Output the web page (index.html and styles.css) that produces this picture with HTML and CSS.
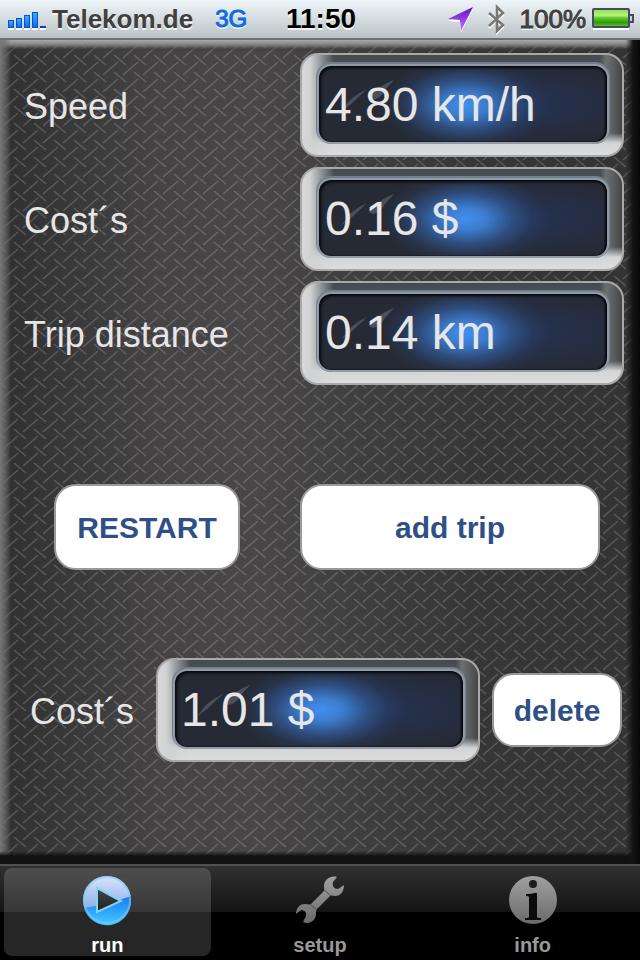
FILE: index.html
```html
<!DOCTYPE html>
<html lang="en">
<head>
    <meta charset="UTF-8">
    <meta name="viewport" content="width=device-width, initial-scale=1.0">
    <title>Trip Costs</title>
    <link rel="stylesheet" href="styles.css">
</head>
<body>

    <!-- Status bar -->
    <header class="status-bar">
        <div class="status-left">
            <svg class="signal" width="38" height="18" viewBox="0 0 38 18">
                <defs>
                    <linearGradient id="signal-fill" x1="0" y1="0" x2="0" y2="1">
                        <stop offset="0" stop-color="#35b0ff"/>
                        <stop offset="1" stop-color="#0a6cf0"/>
                    </linearGradient>
                </defs>
                <g fill="#fff">
                    <rect x="0" y="16" width="6" height="2"/>
                    <rect x="8" y="16" width="6" height="2"/>
                    <rect x="16" y="16" width="6" height="2"/>
                    <rect x="24" y="16" width="6" height="2"/>
                    <rect x="32" y="16" width="6" height="2"/>
                </g>
                <g fill="url(#signal-fill)" stroke="#0b50c8">
                    <rect x="0.5" y="8.500" width="5" height="7"/>
                    <rect x="8.500" y="6.500" width="5" height="9"/>
                    <rect x="16.500" y="3.500" width="5" height="12"/>
                    <rect x="24.500" y="0.500" width="5" height="15"/>
                </g>
                <rect x="32" y="14" width="6" height="2" fill="#0b3fc0"/>
            </svg>
            <span class="carrier">Telekom.de</span>
            <span class="network">3G</span>
        </div>
        <time class="clock">11:50</time>
        <div class="status-right">
            <svg class="location" width="26" height="26" viewBox="0 0 26 26">
                <defs>
                    <linearGradient id="arrow-fill" x1="0" y1="0" x2="0" y2="1">
                        <stop offset="0" stop-color="#5a10c8"/>
                        <stop offset="1" stop-color="#d070ff"/>
                    </linearGradient>
                </defs>
                <path d="M25 3 L0 15 L12 16 L13 27 Z" fill="#fff"/>
                <path d="M25 1 L0 13 L12 14 L13 25 Z" fill="url(#arrow-fill)"/>
            </svg>
            <svg class="bluetooth" width="18" height="32" viewBox="0 0 18 32">
                <path d="M1 10 L15 22 L9 28 V4 L15 10 L1 23" fill="none" stroke="#fff" stroke-width="2" transform="translate(0 2)"/>
                <path d="M1 10 L15 22 L9 28 V4 L15 10 L1 23" fill="none" stroke="#777" stroke-width="2.5"/>
            </svg>
            <span class="percent">100%</span>
            <svg class="battery" width="42" height="22" viewBox="0 0 42 22">
                <defs>
                    <linearGradient id="battery-fill" x1="0" y1="0" x2="0" y2="1">
                        <stop offset="0" stop-color="#8fdc55"/>
                        <stop offset="0.35" stop-color="#b4f57c"/>
                        <stop offset="0.5" stop-color="#63c52d"/>
                        <stop offset="0.75" stop-color="#2f9a08"/>
                        <stop offset="1" stop-color="#67ca2b"/>
                    </linearGradient>
                </defs>
                <path d="M1 21 H37" stroke="#fff" stroke-width="2"/>
                <rect x="1" y="1" width="36" height="18" rx="1" fill="url(#battery-fill)" stroke="#474b62" stroke-width="2"/>
                <path d="M38 7 H41 V14 H38" fill="#c8ced5" stroke="#474b62" stroke-width="2"/>
            </svg>
        </div>
    </header>

    <main class="panel">
        <div class="reading">
            <label for="speed">Speed</label>
            <div class="display">
                <output class="screen" id="speed">4.80 km/h</output>
            </div>
        </div>
        <div class="reading">
            <label for="costs">Cost´s</label>
            <div class="display">
                <output class="screen" id="costs">0.16 $</output>
            </div>
        </div>
        <div class="reading">
            <label for="distance">Trip distance</label>
            <div class="display">
                <output class="screen" id="distance">0.14 km</output>
            </div>
        </div>

        <div class="actions">
            <button class="btn btn-restart" type="button">RESTART</button>
            <button class="btn btn-add" type="button">add trip</button>
        </div>

        <div class="total">
            <label for="total">Cost´s</label>
            <div class="display">
                <output class="screen" id="total">1.01 $</output>
            </div>
            <button class="btn btn-delete" type="button">delete</button>
        </div>
    </main>

    <!-- Tab bar -->
    <nav class="tab-bar">
        <a class="tab active" href="#run">
            <svg width="48" height="48" viewBox="0 0 48 48">
                <defs>
                    <linearGradient id="run-top" x1="0" y1="0" x2="0" y2="1">
                        <stop offset="0" stop-color="#d9e5fb"/>
                        <stop offset="0.65" stop-color="#8db3ec"/>
                    </linearGradient>
                    <linearGradient id="run-bottom" x1="0" y1="0" x2="0" y2="1">
                        <stop offset="0" stop-color="#1a79f2"/>
                        <stop offset="1" stop-color="#44ccff"/>
                    </linearGradient>
                    <linearGradient id="run-arrow" x1="0" y1="0" x2="0" y2="1">
                        <stop offset="0" stop-color="#444"/>
                        <stop offset="1" stop-color="#222"/>
                    </linearGradient>
                </defs>
                <circle cx="24" cy="24" r="24" fill="url(#run-top)"/>
                <path d="M1 32 Q24 29 48 20 V24 A24 24 0 0 1 1 32 Z" fill="url(#run-bottom)"/>
                <circle cx="24" cy="24" r="23" fill="none" stroke="#7ccaf8" stroke-width="2" opacity="0.6"/>
                <path d="M14 12 L38 25 L14 36 Z" fill="url(#run-arrow)" stroke="#82d3fa" stroke-width="2"/>
            </svg>
            <span>run</span>
        </a>
        <a class="tab" href="#setup">
            <svg width="48" height="48" viewBox="0 0 48 48">
                <defs>
                    <linearGradient id="tool-fill" x1="0" y1="0" x2="0" y2="1">
                        <stop offset="0" stop-color="#a0a0a0"/>
                        <stop offset="1" stop-color="#6a6a6a"/>
                    </linearGradient>
                </defs>
                <path d="M41 1 C34 -1 28 4 28 10 C28 13 29 14 27 16 L15 28 C13 29 11 28 9 28 C3 28 0 33 0 38 L5 34 C8 34 11 36 10 40 L7 46 C14 49 20 44 20 38 C20 35 20 34 22 32 L34 20 C36 19 37 20 39 20 C45 20 48 15 48 9 L42 13 C38 13 36 10 37 6 Z" fill="url(#tool-fill)"/>
                <path d="M28 14 L35 20 M14 28 L21 34" stroke="#4a4a4a"/>
            </svg>
            <span>setup</span>
        </a>
        <a class="tab" href="#info">
            <svg width="48" height="48" viewBox="0 0 48 48">
                <circle cx="24" cy="24" r="24" fill="url(#tool-fill)"/>
                <circle cx="24" cy="8" r="4" fill="#1c1c1c"/>
                <path d="M17 20 V18 Q23 18 25 17 H28 V41 Q28 42 32 42 V44 H16 V42 Q20 42 20 41 V21 Q20 20 17 20 Z" fill="#0c0c0c"/>
            </svg>
            <span>info</span>
        </a>
    </nav>

</body>
</html>
```
FILE: styles.css
```css
* {
    box-sizing: border-box;
}
body {
    margin: 0;
    min-height: 100vh;
    display: flex;
    flex-direction: column;
    background-color: #000;
    font-family: "Liberation Sans", Arial, sans-serif;
}
svg {
    display: block;
    overflow: visible;
}

/* Status bar */
.status-bar {
    height: 40px;
    padding: 0 6px 0 8px;
    display: grid;
    grid-template-columns: 1fr auto 1fr;
    align-items: center;
    background: linear-gradient(#eef5f8, #d5dcdf 50%, #bbc3c6);
    border-bottom: 2px solid #657275;
    font-size: 26px;
    font-weight: bold;
    color: #404040;
    text-shadow: 0 2px 0 rgba(255, 255, 255, 0.8);
}
.status-left,
.status-right {
    display: flex;
    align-items: center;
}
.status-right {
    justify-content: flex-end;
}
.signal {
    margin-top: 4px;
}
.carrier {
    margin-left: 6px;
}
.network {
    margin-left: 22px;
    font-size: 24px;
    font-weight: normal;
    color: #0c6ce4;
    -webkit-text-stroke: 1px #0c6ce4;
}
.clock {
    font-size: 28px;
    color: #000;
}
.bluetooth {
    margin: 0 14px;
}
.percent {
    font-weight: normal;
    -webkit-text-stroke: 1px #404040;
}
.battery {
    margin-left: 6px;
}

/* Metal panel */
.panel {
    flex: 1;
    padding: 13px 16px 0 24px;
    background:
        linear-gradient(270deg, #080808 0, #141414 7px, transparent 14px),
        linear-gradient(0deg, #111 0, #111 8px, transparent 13px),
        linear-gradient(90deg, #777 0, rgba(110, 110, 110, 0.6) 6px, transparent 11px),
        linear-gradient(#aaa 0, #888 4px, rgba(60, 60, 60, 0.4) 9px, transparent 12px),
        url("data:image/svg+xml,%3Csvg xmlns='http://www.w3.org/2000/svg' width='20' height='17'%3E%3Cg stroke='%23fff' stroke-opacity='.17' stroke-width='1.6'%3E%3Cpath d='M-6 -2L6 8M14 -2L26 8M-6 15L6 25M14 15L26 25M3 18L18 5M3 1L18 -12'/%3E%3C/g%3E%3C/svg%3E"),
        linear-gradient(90deg, #303030, #454343 25%, #484646 40%, #363636 75%, #333);
}
.reading {
    display: flex;
    align-items: center;
    justify-content: space-between;
    margin-bottom: 10px;
}
label {
    padding-top: 3px;
    font-size: 36px;
    color: #e6e6e6;
}
.display {
    width: 324px;
    height: 104px;
    padding: 11px 15px 13px 17px;
    border: 2px solid #aaa8a6;
    border-radius: 18px;
    background:
        linear-gradient(90deg, #d6d8da 0, #d0d2d4 8px, transparent 32px),
        linear-gradient(0deg, #dcddde 0, #d2d4d6 12px, transparent 22px),
        linear-gradient(270deg, #454545 0, #5a5b5c 8px, #6d7071 16px, transparent 22px),
        linear-gradient(#454a4e 0, #4a5258 12px, #777 100%);
}
.screen {
    display: block;
    height: 100%;
    padding-left: 6px;
    border-radius: 12px;
    background:
        url("data:image/svg+xml,%3Csvg xmlns='http://www.w3.org/2000/svg' width='80' height='50'%3E%3Cg fill='%239aa6bd' fill-opacity='.3'%3E%3Cpath d='M23 45Q30 31 48 23L32 38ZM50 32Q58 20 75 14L66 24Q62 32 54 34Z'/%3E%3C/g%3E%3C/svg%3E") no-repeat,
        radial-gradient(ellipse 84px 46px at 51% 51%, #4290ee 0, rgba(62, 132, 220, 0.9) 25%, rgba(52, 98, 165, 0.6) 55%, rgba(44, 75, 125, 0.25) 80%, transparent),
        radial-gradient(ellipse 130px 40px at 68% 50%, #263356, transparent),
        #262a35;
    box-shadow: inset 2px 2px 3px #05080f, inset -2px 0 2px #05080f, 0 0 0 2px #929ba5, 0 -1px 0 3px #728190;
    color: #e6e6e6;
    font-size: 48px;
    line-height: 78px;
    white-space: nowrap;
}

/* Buttons */
.btn {
    height: 86px;
    padding: 2px 0 0;
    border: 2px solid #999;
    border-radius: 22px;
    background-color: #fff;
    color: #2f4f87;
    font-family: inherit;
    font-size: 30px;
    font-weight: bold;
    cursor: pointer;
}
.actions {
    display: flex;
    justify-content: space-between;
    margin: 99px 24px 88px 30px;
}
.btn-restart {
    width: 186px;
}
.btn-add {
    width: 300px;
}
.total {
    display: flex;
    align-items: center;
    margin: 0 2px 0 6px;
}
.total label {
    flex: 1;
}
.btn-delete {
    width: 130px;
    height: 74px;
    margin-left: 12px;
}

/* Tab bar */
.tab-bar {
    height: 96px;
    display: flex;
    gap: 6px;
    padding: 2px 4px 4px;
    border-top: 2px solid #505050;
    background: linear-gradient(#303030, #141414 46px, #000 46px);
}
.tab {
    flex: 1;
    display: flex;
    flex-direction: column;
    align-items: center;
    padding-top: 8px;
    border-radius: 8px;
    color: #999;
    font-size: 20px;
    font-weight: bold;
    line-height: 24px;
    text-decoration: none;
}
.tab span {
    margin-top: 9px;
}
.tab.active {
    background-color: rgba(255, 255, 255, 0.15);
    color: #fff;
}
```
